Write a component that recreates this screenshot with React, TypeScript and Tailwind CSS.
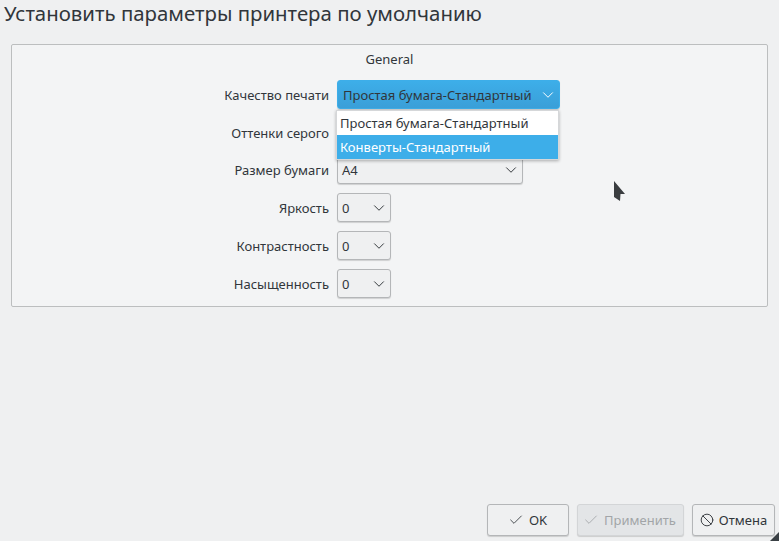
import { Check, Ban, ChevronDown } from 'lucide-react';

const rows = [
  { label: 'Качество печати', value: 'Простая бумага-Стандартный', width: 'w-[223px]', height: 'h-[29px]', active: true },
  { label: 'Оттенки серого', value: '', width: 'w-[186px]', height: 'h-[29px]' },
  { label: 'Размер бумаги', value: 'A4', width: 'w-[186px]', height: 'h-[28px]' },
  { label: 'Яркость', value: '0', width: 'w-[54px]', height: 'h-[29px]' },
  { label: 'Контрастность', value: '0', width: 'w-[54px]', height: 'h-[29px]' },
  { label: 'Насыщенность', value: '0', width: 'w-[54px]', height: 'h-[29px]' },
];

function Combo({ value, width, height, active }: { value: string; width: string; height: string; active?: boolean }) {
  return (
    <div
      className={`${width} ${height} flex items-center justify-between pr-[2px] rounded-[3px] border shadow-[0_1px_1px_rgba(0,0,0,0.15)] ${
        active ? 'pl-[5px] bg-gradient-to-b from-[#3daee9] to-[#3a9fd8] border-[#3daee9]' : 'pl-[4px] bg-[#eff0f1] border-[#b4b6b8]'
      }`}
    >
      <span className="whitespace-nowrap">{value}</span>
      <ChevronDown className={active ? 'w-[18px] h-[18px] text-white' : 'w-[18px] h-[18px] text-[#31363b]'} strokeWidth={1.3} />
    </div>
  );
}

function Button({ children, width, disabled, className }: { children: React.ReactNode; width: string; disabled?: boolean; className?: string }) {
  return (
    <button
      className={`${width} ${className ?? ''} h-[32px] flex items-center justify-center gap-[5px] rounded-[3px] border shadow-[0_1px_1px_rgba(0,0,0,0.15)] ${
        disabled ? 'bg-[#e3e5e7] border-[#d3d5d7] text-[#a2a5a8]' : 'bg-[#eff0f1] border-[#b4b6b8] text-[#31363b]'
      }`}
    >
      {children}
    </button>
  );
}

export default function App() {
  return (
    <div className="relative w-[779px] h-[541px] overflow-hidden flex flex-col bg-[#eff0f1] text-[13px] leading-[18px] text-[#31363b] font-['Noto_Sans',sans-serif]">
      <h1 className="pl-[4px] h-[44px] text-[20.4px] leading-[26px] font-normal whitespace-nowrap">
        Установить параметры принтера по умолчанию
      </h1>

      <div className="relative ml-[11px] w-[757px] h-[263px] border border-[#bcbebf] rounded-[2px] bg-[#f3f4f5] flex flex-col">
        <div className="h-[35px] pt-[5px] text-center">General</div>
        <div className="flex flex-col gap-[9px]">
          {rows.map((row) => (
            <div key={row.label} className="flex items-center gap-[8px]">
              <div className="w-[317px] text-right whitespace-nowrap">{row.label}</div>
              <Combo value={row.value} width={row.width} height={row.height} active={row.active} />
            </div>
          ))}
        </div>

        {/* opened combo list */}
        <div className="absolute left-[324px] top-[65px] w-[223px] h-[50px] bg-white border border-[#d5d7d9] shadow-[0_1px_3px_rgba(0,0,0,0.3)] flex flex-col">
          <div className="h-[24px] pl-[3px] flex items-center">Простая бумага-Стандартный</div>
          <div className="h-[24px] pl-[3px] flex items-center bg-[#3daee9] text-white">Конверты-Стандартный</div>
        </div>
      </div>

      <div className="mt-auto mb-[5px] mr-[4px] flex justify-end gap-[8px]">
        <Button width="w-[82px]" className="pr-[1px]">
          <Check className="w-[16px] h-[16px]" strokeWidth={1.3} />
          OK
        </Button>
        <Button width="w-[107px]" className="pr-[2px]" disabled>
          <Check className="w-[16px] h-[16px]" strokeWidth={1.3} />
          Применить
        </Button>
        <Button width="w-[83px]">
          <Ban className="w-[14px] h-[14px]" strokeWidth={1.6} />
          Отмена
        </Button>
      </div>

      {/* mouse pointer */}
      <svg className="absolute left-[613px] top-[180px]" width="13" height="22" viewBox="0 0 13 22">
        <path d="M1 1 L12 14 L7.5 14 L7 21 L1 17 Z" fill="#3a3d40" />
      </svg>
      {/* resize grip */}
      <svg className="absolute right-0 bottom-0" width="9" height="9" viewBox="0 0 9 9">
        <path d="M9 0 L9 9 L0 9 Z" fill="#3a4045" />
      </svg>
    </div>
  );
}
